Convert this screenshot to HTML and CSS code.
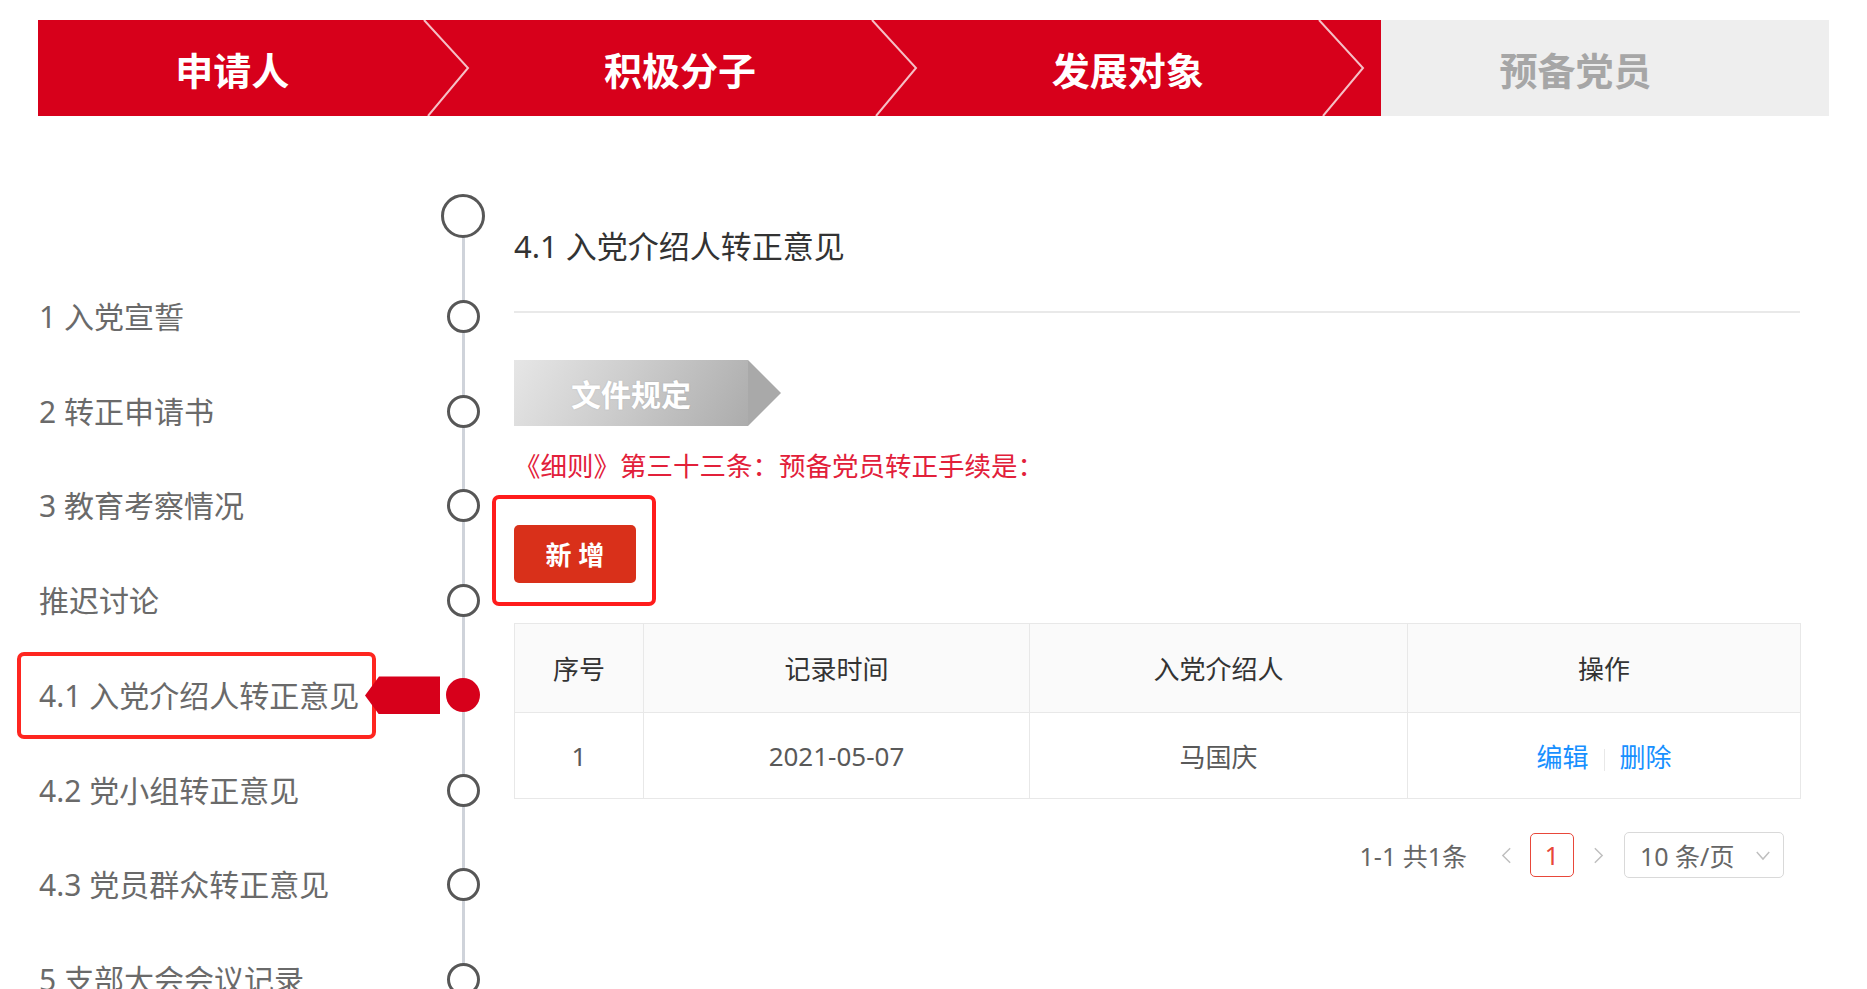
FILE: index.html
```html
<!DOCTYPE html>
<html lang="zh-CN">
<head>
<meta charset="utf-8">
<title>预备党员转正</title>
<link rel="stylesheet" href="styles.css">
</head>
<body>
<div class="page">
  <div class="stepbar">
    <div class="step done"><span>申请人</span><svg class="chev" viewBox="0 0 52 96"><polyline points="4,0 48,48 8,96" /></svg></div>
    <div class="step done"><span>积极分子</span><svg class="chev" viewBox="0 0 52 96"><polyline points="4,0 48,48 8,96" /></svg></div>
    <div class="step done"><span>发展对象</span><svg class="chev" viewBox="0 0 52 96"><polyline points="4,0 48,48 8,96" /></svg></div>
    <div class="step todo"><span>预备党员</span></div>
  </div>

  <div class="main">
    <div class="sidebar">
      <div class="nav-row first"><div class="label-box"></div><div class="tag-slot"></div><div class="node"><span class="dot big"></span></div></div>
      <div class="nav-row"><div class="label-box">1 入党宣誓</div><div class="tag-slot"></div><div class="node"><span class="dot"></span></div></div>
      <div class="nav-row"><div class="label-box">2 转正申请书</div><div class="tag-slot"></div><div class="node"><span class="dot"></span></div></div>
      <div class="nav-row"><div class="label-box">3 教育考察情况</div><div class="tag-slot"></div><div class="node"><span class="dot"></span></div></div>
      <div class="nav-row"><div class="label-box">推迟讨论</div><div class="tag-slot"></div><div class="node"><span class="dot"></span></div></div>
      <div class="nav-row"><div class="label-box active">4.1 入党介绍人转正意见</div><div class="tag-slot"><span class="tag"></span></div><div class="node"><span class="dot on"></span></div></div>
      <div class="nav-row"><div class="label-box">4.2 党小组转正意见</div><div class="tag-slot"></div><div class="node"><span class="dot"></span></div></div>
      <div class="nav-row"><div class="label-box">4.3 党员群众转正意见</div><div class="tag-slot"></div><div class="node"><span class="dot"></span></div></div>
      <div class="nav-row"><div class="label-box">5 支部大会会议记录</div><div class="tag-slot"></div><div class="node"><span class="dot"></span></div></div>
    </div>

    <div class="content">
      <h2 class="title">4.1 入党介绍人转正意见</h2>
      <div class="divider"></div>
      <div class="badge"><div class="badge-body">文件规定</div><div class="badge-arrow"></div></div>
      <p class="rule">《细则》第三十三条：预备党员转正手续是：</p>
      <div class="add-box"><button class="btn">新 增</button></div>
      <table class="grid">
        <colgroup><col class="c1"><col class="c2"><col class="c3"><col class="c4"></colgroup>
        <thead>
          <tr><th>序号</th><th>记录时间</th><th>入党介绍人</th><th>操作</th></tr>
        </thead>
        <tbody>
          <tr><td>1</td><td>2021-05-07</td><td>马国庆</td><td><a class="link">编辑</a><span class="sep"></span><a class="link">删除</a></td></tr>
        </tbody>
      </table>
      <div class="pager">
        <span class="total">1-1 共1条</span>
        <span class="arrow prev"><svg viewBox="0 0 12 20"><polyline points="10,2 2,10 10,18" /></svg></span>
        <span class="page-num">1</span>
        <span class="arrow next"><svg viewBox="0 0 12 20"><polyline points="2,2 10,10 2,18" /></svg></span>
        <span class="size-select"><span>10 条/页</span><svg viewBox="0 0 18 12"><polyline points="2,2 9,10 16,2" /></svg></span>
      </div>
    </div>
  </div>
</div>
</body>
</html>
```

FILE: styles.css
```css
html, body {
  margin: 0;
  padding: 0;
  overflow: hidden;
  background: #fff;
  font-family: "Noto Sans", "Noto Sans CJK SC", "Microsoft YaHei", sans-serif;
}

.page {
  padding-top: 20px;
}

/* top progress bar */
.stepbar {
  display: flex;
  height: 96px;
  margin: 0 38px;
}
.step {
  flex: 1;
  position: relative;
  display: flex;
  align-items: center;
  justify-content: center;
  padding-right: 59px;
  font-size: 38px;
  font-weight: 700;
}
.step.done {
  background: #d7001b;
  color: #fff;
}
.step.todo {
  background: #eeeeee;
  color: #a6a6a6;
}
.chev {
  position: absolute;
  top: 0;
  right: 14px;
  width: 52px;
  height: 96px;
}
.chev polyline {
  fill: none;
  stroke: rgba(255, 255, 255, 0.75);
  stroke-width: 2;
}

/* main */
.main {
  display: flex;
  margin-top: 52px;
  padding-left: 17px;
}

.sidebar {
  position: relative;
  width: 469px;
  flex: none;
}
.sidebar::before {
  content: "";
  position: absolute;
  left: 445px;
  top: 48px;
  bottom: 0;
  width: 3px;
  background: #cfd3da;
}
.nav-row {
  display: flex;
  align-items: center;
  height: 94.75px;
}
.nav-row.first {
  height: 101px;
  padding-bottom: 6px;
  box-sizing: border-box;
}
.label-box {
  width: 359px;
  height: 87px;
  box-sizing: border-box;
  border: 4px solid transparent;
  border-radius: 7px;
  padding-left: 18px;
  padding-bottom: 3px;
  display: flex;
  align-items: center;
  font-size: 30px;
  color: #6a6a6a;
  white-space: nowrap;
}
.label-box.active {
  border-color: #fe2620;
}
.tag-slot {
  width: 64px;
  height: 38px;
  display: flex;
  flex: none;
}
.tag {
  flex: none;
  width: 75px;
  height: 38px;
  margin-left: -11px;
  background: #d7001b;
  clip-path: polygon(0 50%, 14px 0, 100% 0, 100% 100%, 14px 100%);
  position: relative;
  z-index: 2;
}
.node {
  width: 46px;
  flex: none;
  display: flex;
  justify-content: center;
  align-items: center;
  position: relative;
  z-index: 1;
}
.dot {
  width: 33px;
  height: 33px;
  box-sizing: border-box;
  border: 3px solid #575757;
  border-radius: 50%;
  background: #fff;
}
.dot.big {
  width: 44px;
  height: 44px;
}
.dot.on {
  width: 34px;
  height: 34px;
  border: none;
  background: #d7001b;
}

/* content */
.content {
  margin-left: 28px;
  width: 1286px;
  padding-top: 58px;
}
.title {
  margin: 0;
  font-size: 31px;
  line-height: 40px;
  font-weight: 400;
  color: #333;
}
.divider {
  height: 2px;
  background: #e9e9e9;
  margin-top: 45px;
}
.badge {
  display: flex;
  height: 66px;
  margin-top: 47px;
}
.badge-body {
  width: 234px;
  background: linear-gradient(120deg, #e6e6e6 0%, #cdcdcd 45%, #acacac 100%);
  color: #fff;
  font-size: 30px;
  font-weight: 700;
  display: flex;
  align-items: center;
  justify-content: center;
  text-shadow: 0 0 2px rgba(0, 0, 0, 0.12);
}
.badge-arrow {
  width: 33px;
  background: #a9a9a9;
  clip-path: polygon(0 0, 100% 50%, 0 100%);
}
.rule {
  margin: 22px 0 0;
  font-size: 26.5px;
  line-height: 36px;
  color: #e2203a;
}
.add-box {
  margin-top: 11px;
  margin-left: -22px;
  width: 164px;
  height: 111px;
  box-sizing: border-box;
  border: 4px solid #ff1c1c;
  border-radius: 7px;
  padding: 26px 0 0 18px;
}
.btn {
  display: block;
  width: 122px;
  height: 58px;
  border: none;
  border-radius: 5px;
  background: #d9301a;
  color: #fff;
  font-family: inherit;
  font-size: 26px;
  font-weight: 700;
  padding: 0;
}

/* table */
.grid {
  margin-top: 17px;
  width: 1286px;
  border-collapse: collapse;
  table-layout: fixed;
  font-size: 26px;
}
.c1 { width: 129px; }
.c2 { width: 386px; }
.c3 { width: 378px; }
.c4 { width: 393px; }
.grid th, .grid td {
  border: 1px solid #e8e8e8;
  text-align: center;
  padding: 0;
}
.grid th {
  height: 88px;
  background: #fafafa;
  font-weight: 400;
  color: #333;
}
.grid td {
  height: 85px;
  color: #595959;
}
.link {
  color: #1890ff;
}
.sep {
  display: inline-block;
  width: 1px;
  height: 22px;
  background: #e8e8e8;
  margin: 0 15px;
  vertical-align: middle;
}

/* pager */
.pager {
  display: flex;
  justify-content: flex-end;
  align-items: center;
  height: 46px;
  margin-top: 33px;
  padding-right: 16px;
  font-size: 25px;
  color: #666;
}
.total {
  margin-right: 27px;
}
.arrow {
  width: 24px;
  height: 44px;
  display: flex;
  align-items: center;
  justify-content: center;
}
.arrow svg {
  width: 11px;
  height: 19px;
}
.arrow polyline, .size-select polyline {
  fill: none;
  stroke: #bfbfbf;
  stroke-width: 1.6;
}
.page-num {
  width: 44px;
  height: 44px;
  box-sizing: border-box;
  border: 1px solid #e8473a;
  border-radius: 5px;
  color: #e8473a;
  display: flex;
  align-items: center;
  justify-content: center;
  margin: 0 12px;
}
.size-select {
  margin-left: 14px;
  width: 160px;
  height: 46px;
  box-sizing: border-box;
  border: 1px solid #d9d9d9;
  border-radius: 5px;
  padding: 0 12px 0 15px;
  display: flex;
  align-items: center;
  justify-content: space-between;
}
.size-select svg {
  width: 16px;
  height: 11px;
}
```
